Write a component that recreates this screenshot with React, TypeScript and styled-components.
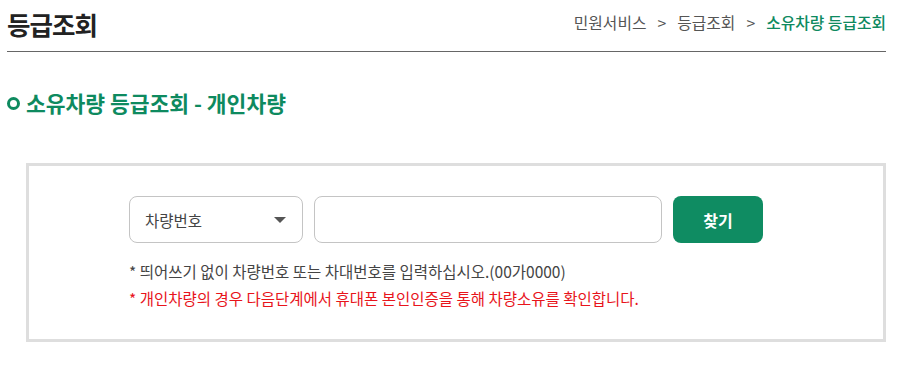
import React from 'react';
import styled, { createGlobalStyle } from 'styled-components';

const GlobalStyle = createGlobalStyle`
  body {
    margin: 0;
    background: #fff;
    font-family: "Noto Sans CJK KR", "Noto Sans", sans-serif;
  }
`;

const Page = styled.div`
  width: 909px;
  padding: 0 23px 0 7px;
  box-sizing: border-box;
`;

const Header = styled.div`
  display: flex;
  justify-content: space-between;
  align-items: center;
  height: 52px;
  border-bottom: 1px solid #666;
  box-sizing: border-box;
`;

const Title = styled.h1`
  margin: 0;
  font-size: 25.5px;
  font-weight: 700;
  color: #222;
  letter-spacing: -1px;
  line-height: 1;
  padding-bottom: 4px;
`;

const Crumbs = styled.div`
  display: flex;
  align-items: center;
  gap: 11px;
  font-size: 15.8px;
  color: #555;
  padding-bottom: 7px;
`;

const Crumb = styled.span<{ $current?: boolean }>`
  color: ${p => (p.$current ? '#0e8a5f' : '#555')};
  font-weight: ${p => (p.$current ? 500 : 400)};
`;

const SubTitle = styled.h2`
  display: flex;
  align-items: center;
  gap: 6px;
  margin: 37px 0 0;
  font-size: 21.5px;
  font-weight: 700;
  color: #0e8a5f;
  line-height: 28px;
`;

const Ring = styled.span`
  width: 7px;
  height: 7px;
  border: 3px solid #0e8a5f;
  border-radius: 50%;
`;

const Box = styled.div`
  margin: 46px 0 0 19px;
  border: 3px solid #dedede;
  padding: 30px 0 0 100px;
  height: 179px;
  box-sizing: border-box;
`;

const SearchRow = styled.div`
  display: flex;
  gap: 11px;
`;

const Select = styled.div`
  width: 174px;
  height: 47px;
  border: 1px solid #c4c4c4;
  border-radius: 8px;
  box-sizing: border-box;
  display: flex;
  align-items: center;
  justify-content: space-between;
  padding: 0 16px 0 15px;
  font-size: 15.5px;
  color: #444;
`;

const Caret = styled.span`
  width: 0;
  height: 0;
  border-left: 6px solid transparent;
  border-right: 6px solid transparent;
  border-top: 6px solid #555;
`;

const Input = styled.input`
  width: 348px;
  height: 47px;
  border: 1px solid #c4c4c4;
  border-radius: 8px;
  box-sizing: border-box;
  outline: none;
`;

const Button = styled.button`
  width: 90px;
  height: 47px;
  border: none;
  border-radius: 8px;
  background: #0f8c62;
  color: #fff;
  font-family: inherit;
  font-size: 16px;
  font-weight: 700;
`;

const Notes = styled.div`
  margin-top: 15px;
  display: flex;
  flex-direction: column;
`;

const Note = styled.p<{ $warn?: boolean }>`
  margin: 0;
  font-size: 15.5px;
  line-height: 27px;
  color: ${p => (p.$warn ? '#e8141b' : '#444')};
`;

export default function App() {
  return (
    <>
      <GlobalStyle />
      <Page>
        <Header>
          <Title>등급조회</Title>
          <Crumbs>
            <Crumb>민원서비스</Crumb>
            <Crumb>&gt;</Crumb>
            <Crumb>등급조회</Crumb>
            <Crumb>&gt;</Crumb>
            <Crumb $current>소유차량 등급조회</Crumb>
          </Crumbs>
        </Header>
        <SubTitle>
          <Ring />
          소유차량 등급조회 - 개인차량
        </SubTitle>
        <Box>
          <SearchRow>
            <Select>
              차량번호
              <Caret />
            </Select>
            <Input />
            <Button>찾기</Button>
          </SearchRow>
          <Notes>
            <Note>* 띄어쓰기 없이 차량번호 또는 차대번호를 입력하십시오.(00가0000)</Note>
            <Note $warn>* 개인차량의 경우 다음단계에서 휴대폰 본인인증을 통해 차량소유를 확인합니다.</Note>
          </Notes>
        </Box>
      </Page>
    </>
  );
}
